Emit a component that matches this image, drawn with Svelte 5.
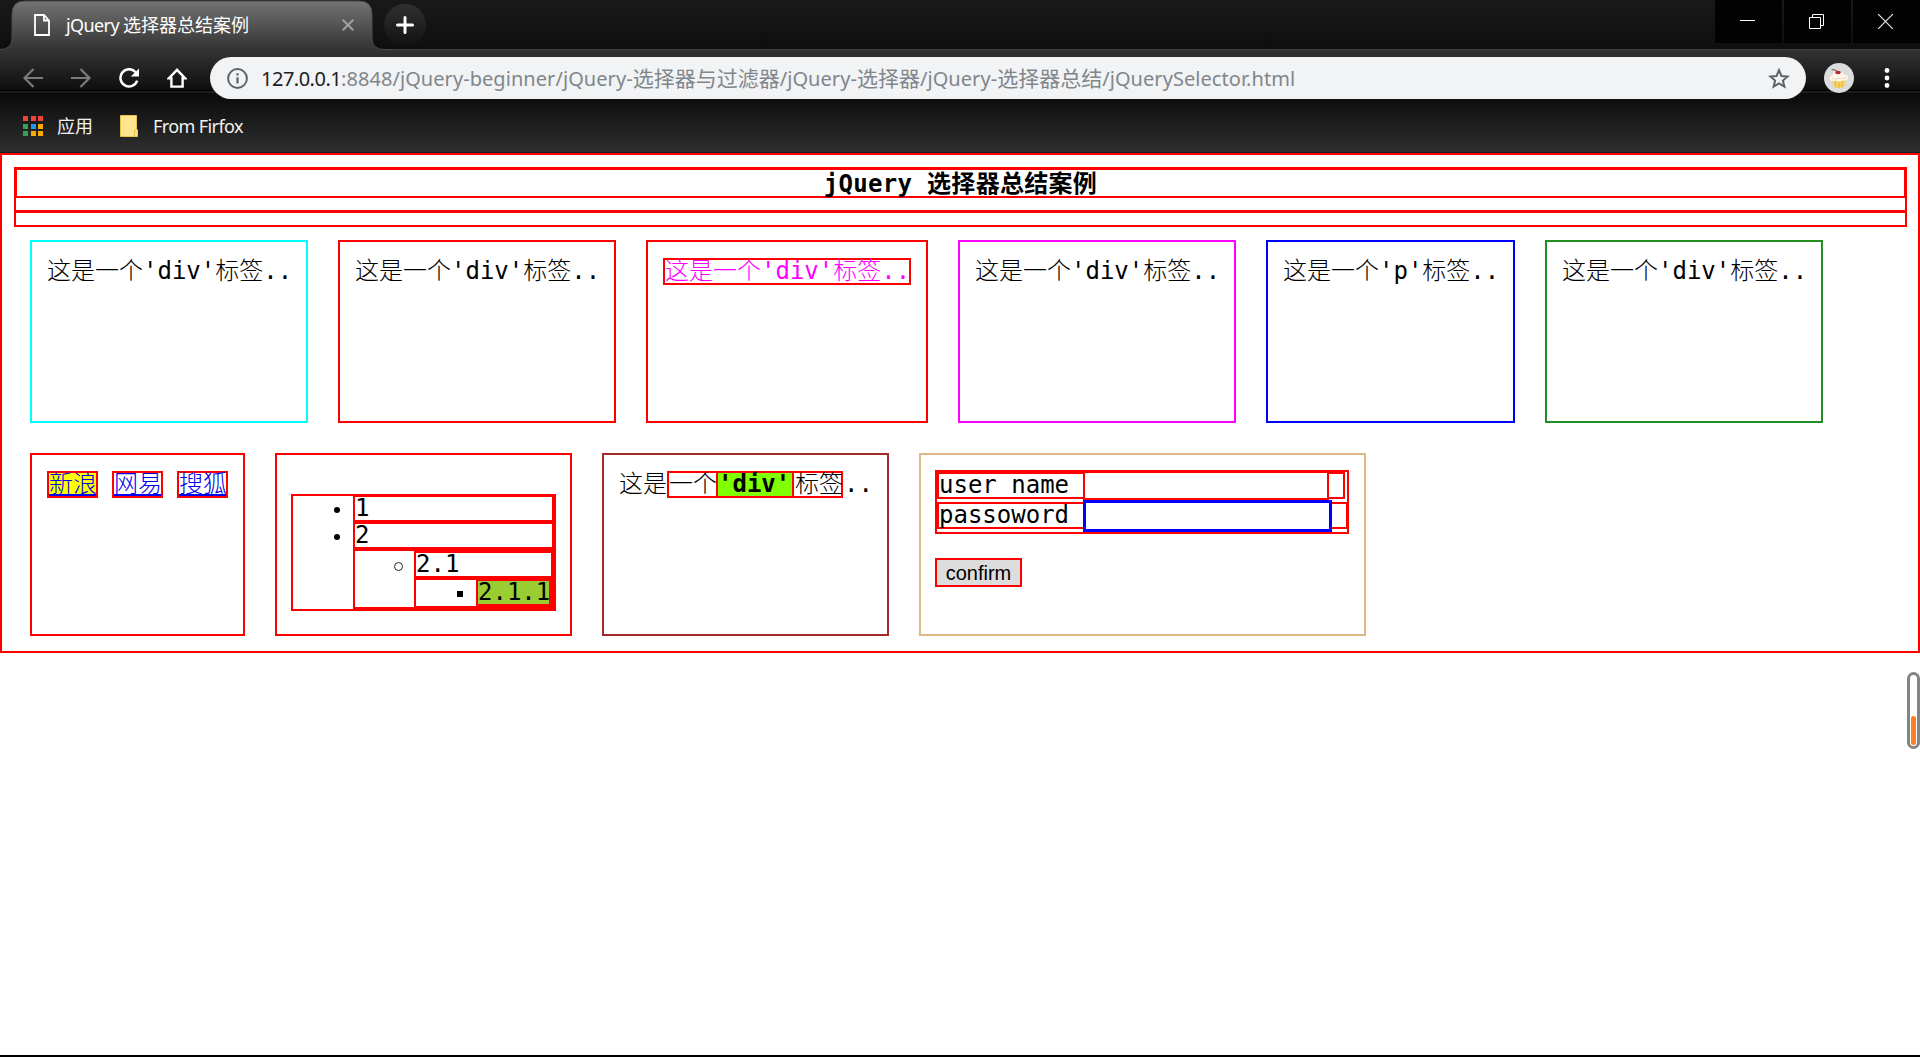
<script>
  const links = [
    { text: '新浪', hot: true },
    { text: '网易', hot: false },
    { text: '搜狐', hot: false }
  ];
  const appColors = ['#f44336', '#f44336', '#f44336', '#34a05a', '#2196f3', '#f9ab00', '#34a05a', '#f9ab00', '#f9ab00'];
</script>

<div class="window">
  <header class="chrome">
    <div class="strip">
      <div class="tab">
        <svg class="tab-shape" width="390" height="50" viewBox="0 0 390 50">
          <defs>
            <linearGradient id="tabFill" x1="0" y1="0" x2="0" y2="1">
              <stop offset="0" stop-color="#737373" />
              <stop offset="0.5" stop-color="#535353" />
              <stop offset="1" stop-color="#333" />
            </linearGradient>
          </defs>
          <path d="M0 50 V49.5 Q12 49.5 12 38 V14 Q12 1 25 1 H359 Q372 1 372 14 V38 Q372 49.5 384 49.5 V50 Z" fill="url(#tabFill)" />
          <path d="M0 49.5 Q12 49.5 12 38 V14 Q12 1 25 1 H359 Q372 1 372 14 V38 Q372 49.5 384 49.5 H390" fill="none" stroke="#4a4a4a" />
        </svg>
        <div class="tab-body">
          <svg width="16" height="22" viewBox="0 0 16 22" fill="none" stroke="#fff" stroke-width="1.8">
            <path d="M1 1 H10 L15 6.5 V21 H1 Z M10 1 V6.5 H15" />
          </svg>
          <span class="tab-title"><span class="latin">jQuery </span>选择器总结案例</span>
          <svg class="tab-close" width="12" height="12" viewBox="0 0 12 12" stroke="#a0a0a0" stroke-width="2">
            <path d="M0.7 0.7 L11.3 11.3 M11.3 0.7 L0.7 11.3" />
          </svg>
        </div>
      </div>
      <div class="new-tab">
        <svg width="18" height="18" viewBox="0 0 18 18" stroke="#fff" stroke-width="3" stroke-linecap="round"><path d="M9 1.5 V16.5 M1.5 9 H16.5" /></svg>
      </div>
      <div class="win-buttons">
        <div class="win"><svg width="15" height="15" viewBox="0 0 15 15"><path d="M0 6.5 H15" stroke="#fff" /></svg></div>
        <div class="win"><svg width="15" height="15" viewBox="0 0 15 15" fill="none" stroke="#fff"><path d="M0.5 3.5 H11.5 V14.5 H0.5 Z M3.5 3.5 V0.5 H14.5 V11.5 H11.5" /></svg></div>
        <div class="win"><svg width="15" height="15" viewBox="0 0 15 15" stroke="#e8e8e8" stroke-width="1.2"><path d="M0 0 L15 15 M15 0 L0 15" /></svg></div>
      </div>
    </div>

    <div class="toolbar">
      <svg width="20" height="20" viewBox="0 0 20 20" fill="none" stroke="#7b7b7b" stroke-width="2.2"><path d="M20 10 H2 M10.5 1 L1.5 10 L10.5 19" /></svg>
      <svg width="20" height="20" viewBox="0 0 20 20" fill="none" stroke="#7b7b7b" stroke-width="2.2"><path d="M0 10 H18 M9.5 1 L18.5 10 L9.5 19" /></svg>
      <svg width="20" height="20" viewBox="0 0 20 20"><path d="M16.6 4.2 A8.6 8.6 0 1 0 18.2 12.6" fill="none" stroke="#fff" stroke-width="2.5" /><path d="M20 0.5 V8.5 H11.8 Z" fill="#fff" /></svg>
      <svg width="20" height="20" viewBox="0 0 20 20" fill="none" stroke="#fff" stroke-width="2.4"><path d="M10 1.8 L1.8 10.3 H4.4 V18.6 H15.6 V10.3 H18.2 Z" /></svg>
      <div class="address">
        <svg class="info" width="21" height="21" viewBox="0 0 21 21"><circle cx="10.5" cy="10.5" r="9.4" fill="none" stroke="#5f6368" stroke-width="2" /><path d="M10.5 9.3 V15.6 M10.5 5.3 V7.6" stroke="#5f6368" stroke-width="2.2" /></svg>
        <span class="url"><span class="host">127.0.0.1</span>:8848/jQuery-beginner/jQuery-<span class="han">选择器与过滤器</span>/jQuery-<span class="han">选择器</span>/jQuery-<span class="han">选择器总结</span>/jQuerySelector.html</span>
        <svg class="star" width="22" height="21" viewBox="0 0 22 21" fill="none" stroke="#5f6368" stroke-width="2"><path d="M11 2.2 L13.4 8 L19.7 8.5 L14.9 12.6 L16.4 18.7 L11 15.4 L5.6 18.7 L7.1 12.6 L2.3 8.5 L8.6 8 Z" /></svg>
      </div>
      <svg class="avatar" width="30" height="30" viewBox="0 0 30 30">
        <circle cx="15" cy="15" r="15" fill="#dcdcdc" />
        <path d="M7.5 16 L10 24 Q15 26.5 20 24 L22.5 16 Z" fill="#f7d568" />
        <path d="M11 18 L12.2 24 M15 18 V25 M19 18 L17.8 24" stroke="#dba93a" stroke-width="0.8" />
        <path d="M6 16.5 Q4.5 13.5 8 12.5 Q8.5 9 13 9 Q18 8 20.5 11.5 Q25 12 24 15.5 Q23 18.5 19.5 17.3 Q15 19.5 11.5 17.5 Q7.5 19 6 16.5 Z" fill="#fff6ea" />
        <path d="M8 15.2 Q12 17 15 15 Q19 16.5 22.5 14.5" fill="none" stroke="#ecd0b2" stroke-width="0.8" />
        <ellipse cx="14" cy="9.5" rx="2.8" ry="1.8" fill="#b3262b" />
        <path d="M13 8 Q10 6 7.5 6.8" fill="none" stroke="#6d4a48" />
      </svg>
      <svg class="menu" width="6" height="20" viewBox="0 0 6 20" fill="#fff"><circle cx="3" cy="2.5" r="2.4" /><circle cx="3" cy="10" r="2.4" /><circle cx="3" cy="17.5" r="2.4" /></svg>
    </div>

    <div class="bookmarks">
      <div class="apps">
        {#each appColors as c}<i style:background={c}></i>{/each}
      </div>
      <span class="apps-label">应用</span>
      <svg class="folder" width="18" height="22" viewBox="0 0 18 22"><path d="M0.5 0.5 H16.5 V14.5 H17.5 V21.5 H0.5 Z" fill="#ffe590" stroke="#e8c54d" /><path d="M14.5 21 V16 Q14.5 14.5 17 14.5" fill="none" stroke="#e3bd3c" /></svg>
      <span class="folder-label">From Firfox</span>
    </div>
  </header>

  <main class="page">
    <h1>jQuery 选择器总结案例</h1>
    <div class="head-rest"></div>
    <div class="rule-box"></div>

    <div class="row first">
      <div class="card w278 aqua">这是一个'div'标签..</div>
      <div class="card w278">这是一个'div'标签..</div>
      <div class="card w282"><span class="pink">这是一个'div'标签..</span></div>
      <div class="card w278 fuchsia">这是一个'div'标签..</div>
      <p class="card w249 blue">这是一个'p'标签..</p>
      <div class="card w278 green">这是一个'div'标签..</div>
    </div>

    <div class="row second">
      <div class="card links">
        {#each links as l}<a class:hot={l.hot} href="#top">{l.text}</a>{/each}
      </div>

      <div class="card list">
        <ul class="l1">
          <li class="one">1</li>
          <li class="two">2
            <ul class="l2">
              <li class="two-one">2.1
                <ul class="l3">
                  <li class="leaf">2.1.1</li>
                </ul>
              </li>
            </ul>
          </li>
        </ul>
      </div>

      <div class="card mixed">
        这是<span class="outer"><span class="lead">一个</span><b>'div'</b><span class="tail">标签</span></span><span class="dots">..</span>
      </div>

      <div class="card form">
        <div class="fields">
          <label class="user"><span class="name">user name</span><input type="text" /><span class="end"></span></label>
          <label class="pass"><span class="name">passoword</span><input type="password" /><span class="end"></span></label>
        </div>
        <button type="button">confirm</button>
      </div>
    </div>
  </main>

  <div class="gauge"><div class="level"></div></div>
  <div class="bottom-line"></div>
</div>

<style>
  :global(body) { margin: 0; background: #fff; overflow: hidden; }
  * { box-sizing: border-box; }
  svg { display: block; flex: none; }
  .window {
    position: relative;
    width: 1920px;
    height: 1057px;
    display: flex;
    flex-direction: column;
    background: #fff;
    overflow: hidden;
  }

  .chrome {
    height: 153px;
    flex: none;
    border-bottom: 1px solid #1c1c1c;
    background: #2e2e2e;
    color: #fff;
    font: 18px/24px 'Noto Sans', 'Noto Sans CJK SC', sans-serif;
  }
  .strip { display: flex; height: 50px; background: linear-gradient(#191919, #0e0e0e); box-shadow: inset 0 -1px #404040; }
  .tab { position: relative; width: 384px; height: 50px; flex: none; }
  .tab-shape { position: absolute; left: 0; top: 0; }
  .tab-body { position: relative; display: flex; align-items: center; height: 50px; padding: 0 30px 0 34px; }
  .tab-title { margin-left: 16px; white-space: pre; }
  .tab-title .latin { display: inline-block; width: 57px; letter-spacing: -0.6px; }
  .tab-close { margin-left: auto; }
  .new-tab { display: flex; align-items: center; justify-content: center; width: 42px; height: 42px; margin-top: 4px; border-radius: 50%; background: linear-gradient(#303030, #121212); }
  .win-buttons { display: flex; gap: 2px; margin-left: auto; height: 43px; }
  .win { width: 67px; height: 43px; padding-right: 2px; background: #020202; display: flex; align-items: center; justify-content: center; }

  .toolbar {
    display: flex;
    align-items: center;
    height: 43px;
    padding: 13px 30px 0 23px;
    gap: 28px;
    background: linear-gradient(#343434, #0e0e0e 40px, #000 40px, #000 41px, #1c1c1c 41px);
  }
  .address { display: flex; align-items: center; width: 1596px; height: 42px; flex: none; margin-left: -5px; border-radius: 21px; padding: 0 16px 0 17px; background: #f1f3f4; z-index: 1; }
  .url { margin-left: 13px; padding-top: 1px; font-size: 20px; letter-spacing: 0.06px; color: #80868b; white-space: nowrap; }
  .host { color: #202124; display: inline-block; width: 80px; letter-spacing: -0.5px; }
  .han { font-size: 21px; letter-spacing: 0; }
  .star { margin-left: auto; }
  .avatar { margin-left: -10px; }
  .menu { margin-left: 2px; }

  .bookmarks { display: flex; align-items: center; height: 59px; padding: 7px 0 0 23px; background: linear-gradient(#0a0a0a, #2f2f2f); color: #f2f2f2; }
  .apps { display: grid; grid-template-columns: repeat(3, 5px); gap: 2.5px; width: 20px; }
  .apps i { height: 5px; }
  .apps-label { margin-left: 14px; width: 36px; margin-top: -1px; }
  .folder { margin-left: 27px; }
  .folder-label { margin: -1px 0 0 15px; letter-spacing: -0.6px; }

  .page {
    height: 500px;
    flex: none;
    border: 2px solid red;
    padding: 12px 11px 0 12px;
    font: 300 24px/27px 'DejaVu Sans Mono', 'Noto Sans CJK SC', monospace;
    color: #000;
  }
  h1 { margin: 0; height: 31px; border: solid red; border-width: 3px 3px 2px; font-size: 24px; line-height: 28px; font-weight: 700; text-align: center; letter-spacing: 0.3px; }
  .head-rest { height: 15px; border: solid red; border-width: 0 2px 3px; }
  .rule-box { height: 14px; border: solid red; border-width: 0 2px 2px; }
  .row { display: flex; gap: 30px; padding-left: 16px; }
  .first { margin-top: 13px; }
  .second { margin-top: 30px; }
  .card { height: 183px; flex: none; margin: 0; border: 2px solid red; padding: 16px 15px 15px; white-space: nowrap; }
  .w278 { width: 278px; }
  .w282 { width: 282px; }
  .w249 { width: 249px; }
  .aqua { border-color: aqua; }
  .fuchsia { border-color: fuchsia; }
  .blue { border-color: blue; }
  .green { border-color: #228f22; }
  .pink { display: block; width: 248px; height: 27px; line-height: 23px; border: 2px solid red; color: fuchsia; }

  .links { display: flex; gap: 14px; width: 215px; }
  .links a { width: 51px; height: 27px; flex: none; border: 2px solid red; line-height: 23px; color: #00e; text-decoration: none; box-shadow: inset 0 -2px #00f; }
  .links .hot { background: yellow; }

  .list { width: 297px; padding: 39px 14px 0; }
  ul { margin: 0; padding: 0; list-style: none; border: 0 solid red; white-space: normal; }
  li { position: relative; border: 2px solid red; line-height: 23px; white-space: nowrap; }
  li::before { content: ''; position: absolute; left: -21px; top: 10px; width: 6px; height: 6px; background: #000; }
  .l1 { width: 265px; height: 117px; border-width: 2px; padding-left: 60px; }
  .one { height: 26px; border-top-width: 1px; }
  .two { height: 87px; }
  .one::before, .two::before { border-radius: 50%; }
  .l2 { height: 60px; border-top-width: 4px; padding-left: 59px; }
  .two-one { height: 56px; border-width: 2px 1px 1px 2px; }
  .two-one::before { left: -22px; top: 9px; width: 7px; height: 7px; border: 1px solid #222; border-radius: 50%; background: none; }
  .l3 { height: 30px; border-top-width: 4px; padding-left: 60px; }
  .leaf { height: 26px; border-top-width: 1px; background: yellowgreen; }

  .mixed { width: 287px; display: flex; border-color: brown; line-height: 27px; }
  .outer { display: flex; height: 27px; width: 176px; border: 2px solid red; line-height: 23px; flex: none; }
  .lead { width: 47px; }
  b { width: 78px; border: solid red; border-width: 0 2px; background: chartreuse; font-weight: 700; }
  .tail { margin-left: 1px; width: 46px; }
  .dots { margin-left: 1px; }

  .form { width: 447px; padding: 15px 14px; border-color: burlywood; }
  .fields { width: 414px; height: 64px; border: 2px solid red; }
  label { display: flex; align-items: flex-start; }
  label span, input { border: 2px solid red; flex: none; }
  label span { height: 27px; line-height: 23px; }
  .name { width: 146px; border-right: 0; }
  .end { border-left: 0; }
  input { margin: 0; padding: 0; outline: 0; background: #fff; border-radius: 0; font: inherit; }
  .user input { width: 246px; height: 28px; border-top-width: 1px; }
  .user .end { width: 16px; }
  .pass span { margin-top: 2px; }
  .pass input { width: 249px; height: 32px; border: 3px solid blue; }
  .pass .end { width: 15px; border-right-width: 1px; }
  button { display: block; width: 87px; height: 29px; margin-top: 24px; border: 2px solid red; background: #ddd; padding: 0; color: #000; font: 20px/24px 'Liberation Sans', Arial, sans-serif; }

  .gauge { position: absolute; left: 1907px; top: 672px; width: 13px; height: 77px; border: 3px solid #848484; border-radius: 6.5px; background: #fff; }
  .level { position: absolute; left: 1px; bottom: 1px; width: 5px; height: 29px; border-radius: 2.5px; background: #ff7f27; }
  .bottom-line { margin-top: auto; height: 2px; background: #000; }
</style>
